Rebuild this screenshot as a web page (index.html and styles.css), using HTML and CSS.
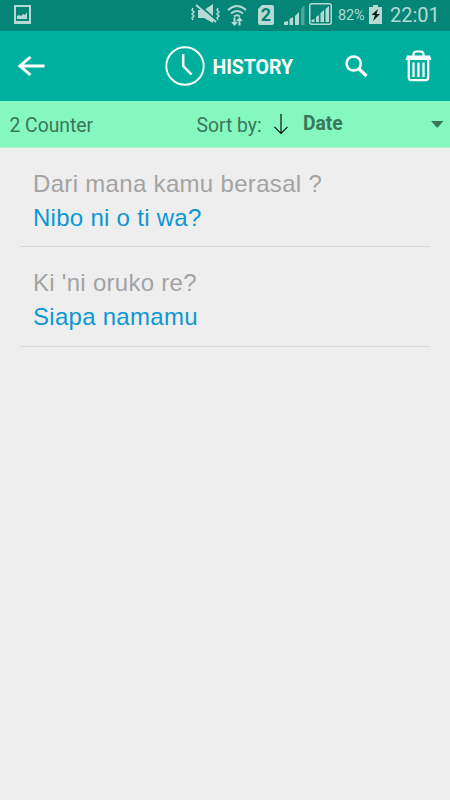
FILE: index.html
```html
<!DOCTYPE html>
<html lang="en">
<head>
<meta charset="utf-8">
<title>History</title>
<link rel="stylesheet" href="styles.css">
</head>
<body>
<div class="status">
  <svg class="shot" width="17" height="19" viewBox="0 0 17 19"><path class="fill" fill-rule="evenodd" d="M0 0h17v19H0zM2 2v14h13V2z"/><path class="fill" d="M3 14v-3l2-1 2 1 2-2 2 1 2-3v7z"/></svg>
  <svg class="mute" width="29" height="20" viewBox="0 0 29 20"><path class="fill" d="M7 6h6l9-6v19l-9-5H7z"/><path class="cut" d="M7 0l18 16"/><path class="line" d="M5 1l20 17" stroke-width="2"/><path class="line" stroke-width="1.5" d="M2 4L1 6l2 2-2 2 2 2-2 2 1 2M27 4l-1 2 2 2-2 2 2 2-2 2 1 2"/></svg>
  <svg class="wifi" width="20" height="23" viewBox="0 0 20 23"><path class="line" stroke-width="2" d="M1 6q9-8 18 0M4 9.500q6-5 12 0M7 12.500q3-2.500 6 0"/><path class="fill" d="M6.500 13.500h2V18H11l-3.500 4L4 18h2.500zM11.500 21.500h2V17H16l-3.500-4L9 17h2.500z"/></svg>
  <div class="sim">2</div>
  <svg class="signal" width="21" height="20" viewBox="0 0 21 20"><path class="fill" d="M0 20v-3l4-1v4zM5.500 20v-6l3.500-2v8zM11 20v-9l4-4v13z"/><path class="fill dim" d="M17 20V4l3.500-4v20z"/></svg>
  <svg class="boxed" width="23" height="22" viewBox="0 0 23 22"><rect class="line" x=".75" y=".75" width="21.500" height="20.500" rx="2" stroke-width="1.500"/><path class="fill" d="M2.500 19v-2l3-1v3zM7 19v-5l3-2v7zM11.500 19v-9l3.500-3v12zM16.500 19V6l3.500-3v16z"/></svg>
  <span class="percent">82%</span>
  <svg class="battery" width="13" height="19" viewBox="0 0 13 19"><path class="fill" d="M4 0h5v2h4v17H0V2h4z"/><path d="M9 4L2.500 10H6l-2 6 7-7H7.500z" fill="#10221f"/></svg>
  <span class="clock">22:01</span>
</div>
<header class="bar">
  <svg class="back" width="28" height="20" viewBox="0 0 28 20"><path d="M26.500 10H2M12.500 1L2 10l10.500 9" fill="none" stroke="#fff" stroke-width="2.900"/></svg>
  <svg class="dial" width="40" height="40" viewBox="0 0 40 40"><circle cx="20" cy="20" r="18.700" fill="none" stroke="#fff" stroke-width="1.900"/><path d="M18.200 8v12l8.300 8.500" fill="none" stroke="#fff" stroke-width="2.500"/></svg>
  <h1>HISTORY</h1>
  <svg class="search" width="23" height="23" viewBox="0 0 23 23"><circle cx="8.700" cy="8.500" r="7.100" fill="none" stroke="#fff" stroke-width="2.500"/><path d="M13.500 13.500l8 7.500" stroke="#fff" stroke-width="3.200"/></svg>
  <svg class="trash" width="27" height="32" viewBox="0 0 27 32"><g fill="none" stroke="#fff"><path d="M8.500 6V4.500q0-3 3-3h4q3 0 3 3V6" stroke-width="2.200"/><path d="M3.800 9v18.500q0 2.600 2.600 2.600h14.200q2.600 0 2.600-2.600V9" stroke-width="2.300"/><path d="M8.500 12.500V27M13.500 12.500V27M18.500 12.500V27" stroke-width="2.300"/></g><path d="M2 5.500h23l1.500 4.500H.5z" fill="#fff"/></svg>
</header>
<div class="sort">
  <span class="count">2 Counter</span>
  <span class="label">Sort by:</span>
  <svg class="down" width="14" height="21" viewBox="0 0 14 21"><path d="M7 0v20M.5 12.800L7 19.500l6.500-6.700" fill="none" stroke="#0b1510" stroke-width="1.200"/></svg>
  <strong>Date</strong>
  <svg class="caret" width="13" height="7" viewBox="0 0 13 7"><path d="M0 0h12.500L6.250 7z" fill="#39775a"/></svg>
</div>
<main>
  <article><p class="wide">Dari mana kamu berasal ?</p><p class="answer">Nibo ni o ti wa?</p></article>
  <article><p>Ki 'ni oruko re?</p><p class="answer">Siapa namamu</p></article>
</main>
</body>
</html>
```
FILE: styles.css
```css
* { box-sizing: border-box; }
body { margin: 0; height: 800px; background: #eeeeee; font-family: Roboto, sans-serif; overflow: hidden; }
svg { display: block; flex: none; }
.status { display: flex; align-items: flex-start; height: 31px; background: #048576; color: #b5dad5; }
.fill { fill: #b5dad5; }
.dim { opacity: .4; }
.line { fill: none; stroke: #b5dad5; }
.cut { stroke: #048576; stroke-width: 2; }
.shot { margin: 5px 0 0 14px; }
.mute { margin: 4px 0 0 160px; }
.wifi { margin: 4px 0 0 7px; }
.sim { width: 16px; height: 20px; margin: 5px 0 0 11px; background: #b5dad5; color: #048576; border-radius: 2px; clip-path: polygon(4px 0, 100% 0, 100% 100%, 0 100%, 0 4px); font-weight: 700; font-size: 18px; line-height: 20px; text-align: center; }
.signal { margin: 5px 0 0 10px; }
.boxed { margin: 3px 0 0 4px; }
.percent { width: 28px; margin: 6px 0 0 6px; font-size: 14.5px; line-height: 20px; letter-spacing: -.2px; }
.battery { margin: 5px 0 0 3px; }
.clock { margin: 3px 0 0 8px; font-size: 20px; line-height: 24px; white-space: nowrap; }
.bar { display: flex; align-items: flex-start; height: 70px; background: #00b09f; color: #fff; }
.back { margin: 25px 0 0 18px; }
.dial { margin: 15px 0 0 119px; }
h1 { width: 83px; margin: 25px 0 0 7.5px; font-size: 19.5px; line-height: 24px; font-weight: 700; letter-spacing: -.05px; }
.search { margin: 24px 0 0 49.5px; }
.trash { margin: 19px 0 0 37px; }
.sort { display: flex; align-items: flex-start; height: 47px; background: #84f8bf; border-bottom: 1px solid #b5f1d3; color: #39775a; font-size: 19.3px; line-height: 24px; white-space: nowrap; }
.count { width: 187px; margin: 13px 0 0 9.5px; }
.label { width: 77.5px; margin-top: 13px; }
.down { margin-top: 13px; }
strong { width: 128px; margin: 11px 0 0 15px; }
.caret { margin-top: 20px; }
main { padding: 0 20px; }
article { height: 99.5px; padding: 22px 13px 0; border-bottom: 1px solid #d9d9d9; font: 24px/28px "Liberation Sans", sans-serif; letter-spacing: .28px; color: #a3a3a3; white-space: nowrap; }
article:first-child { height: 99px; }
p { margin: 0; }
.wide { letter-spacing: .32px; }
.answer { margin-top: 5.5px; color: #0d97d3; }
```
